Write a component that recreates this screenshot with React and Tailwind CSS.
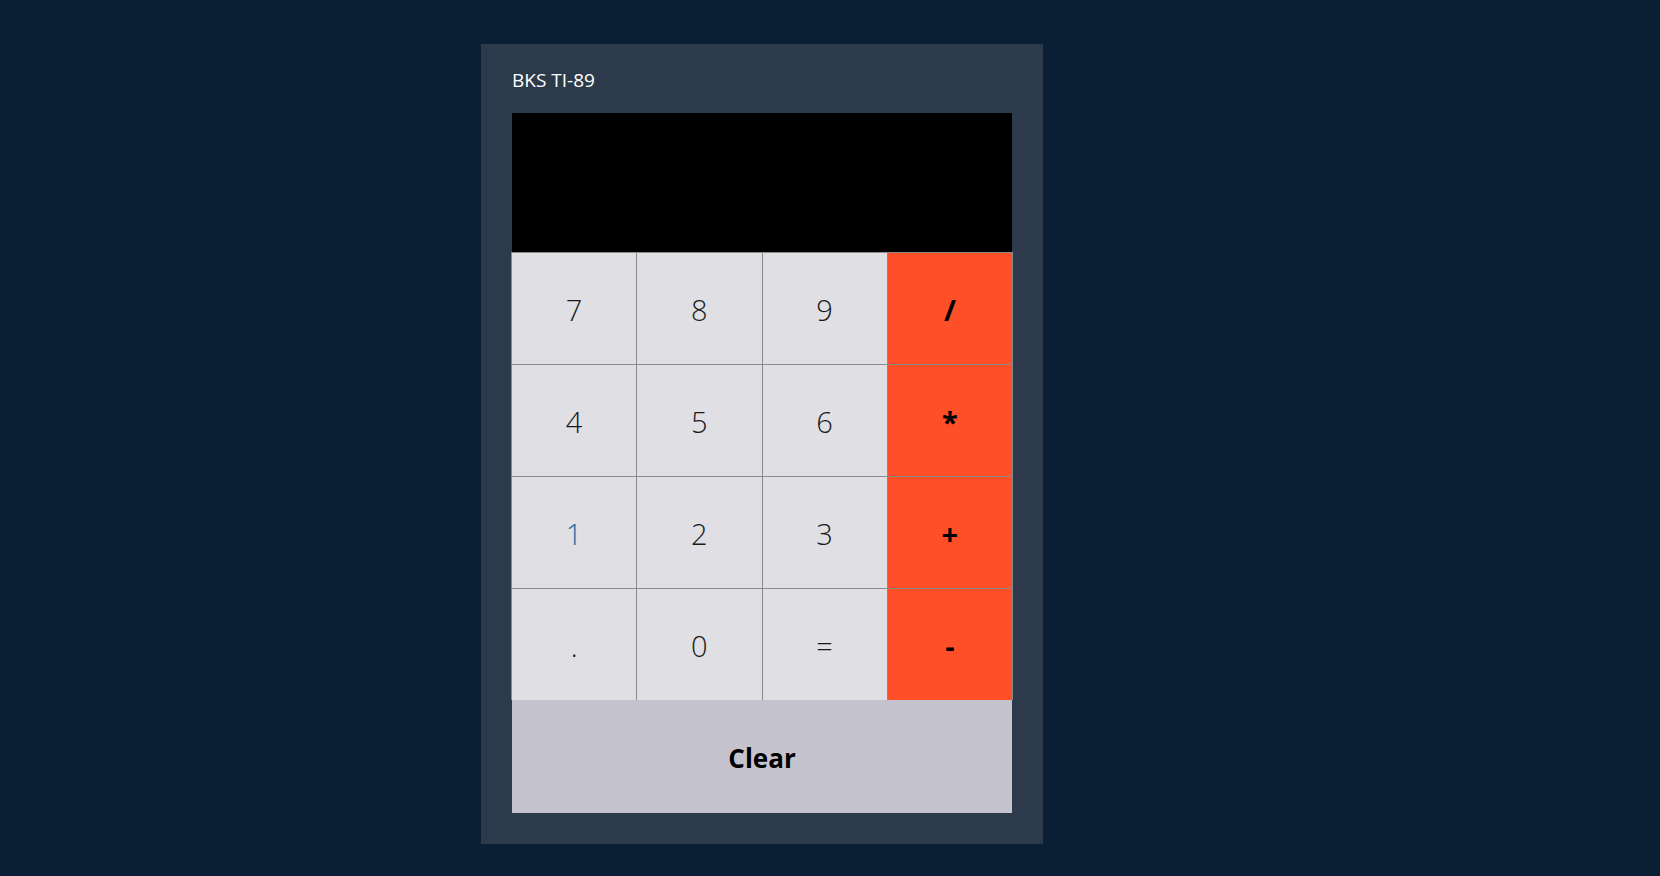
import React from "react";

const keys = [
  { label: "7" },
  { label: "8" },
  { label: "9" },
  { label: "/", op: true },
  { label: "4" },
  { label: "5" },
  { label: "6" },
  { label: "*", op: true },
  { label: "1", active: true },
  { label: "2" },
  { label: "3" },
  { label: "+", op: true },
  { label: "." },
  { label: "0" },
  { label: "=" },
  { label: "-", op: true },
];

const Key = ({ label, op, active }) => {
  let cls = "bg-[#dfdfe4] font-light text-[#1a1a1a]";
  if (op) cls = "bg-[#ff4f29] font-bold text-black";
  if (active) cls = "bg-[#dfdfe4] font-light text-[#1a6d9f]";
  return (
    <button className={`h-[111px] pt-[2px] flex items-center justify-center text-[29px] ${cls}`}>
      {label}
    </button>
  );
};

export default function App() {
  return (
    <div
      className="min-h-screen w-full bg-[#0a1f33] pt-[44px] pb-[32px]"
      style={{ fontFamily: '"Open Sans", "Noto Sans", sans-serif' }}
    >
      <div className="ml-[481px] w-[562px] h-[800px] bg-[#2c3a4b] px-[31px] pt-[23px] pb-[31px] flex flex-col">
        <h1 className="text-[19px] text-white leading-[27px] mb-[19px]">BKS TI-89</h1>
        <div className="h-[139px] bg-black"></div>
        <div className="-mx-px grid grid-cols-4 gap-px bg-[#8a8a8a] pt-px px-px">
          {keys.map((k, i) => (
            <Key key={i} {...k} />
          ))}
        </div>
        <button className="h-[113px] pt-[4px] bg-[#c5c3cd] text-[26px] font-bold text-black">
          Clear
        </button>
      </div>
    </div>
  );
}
